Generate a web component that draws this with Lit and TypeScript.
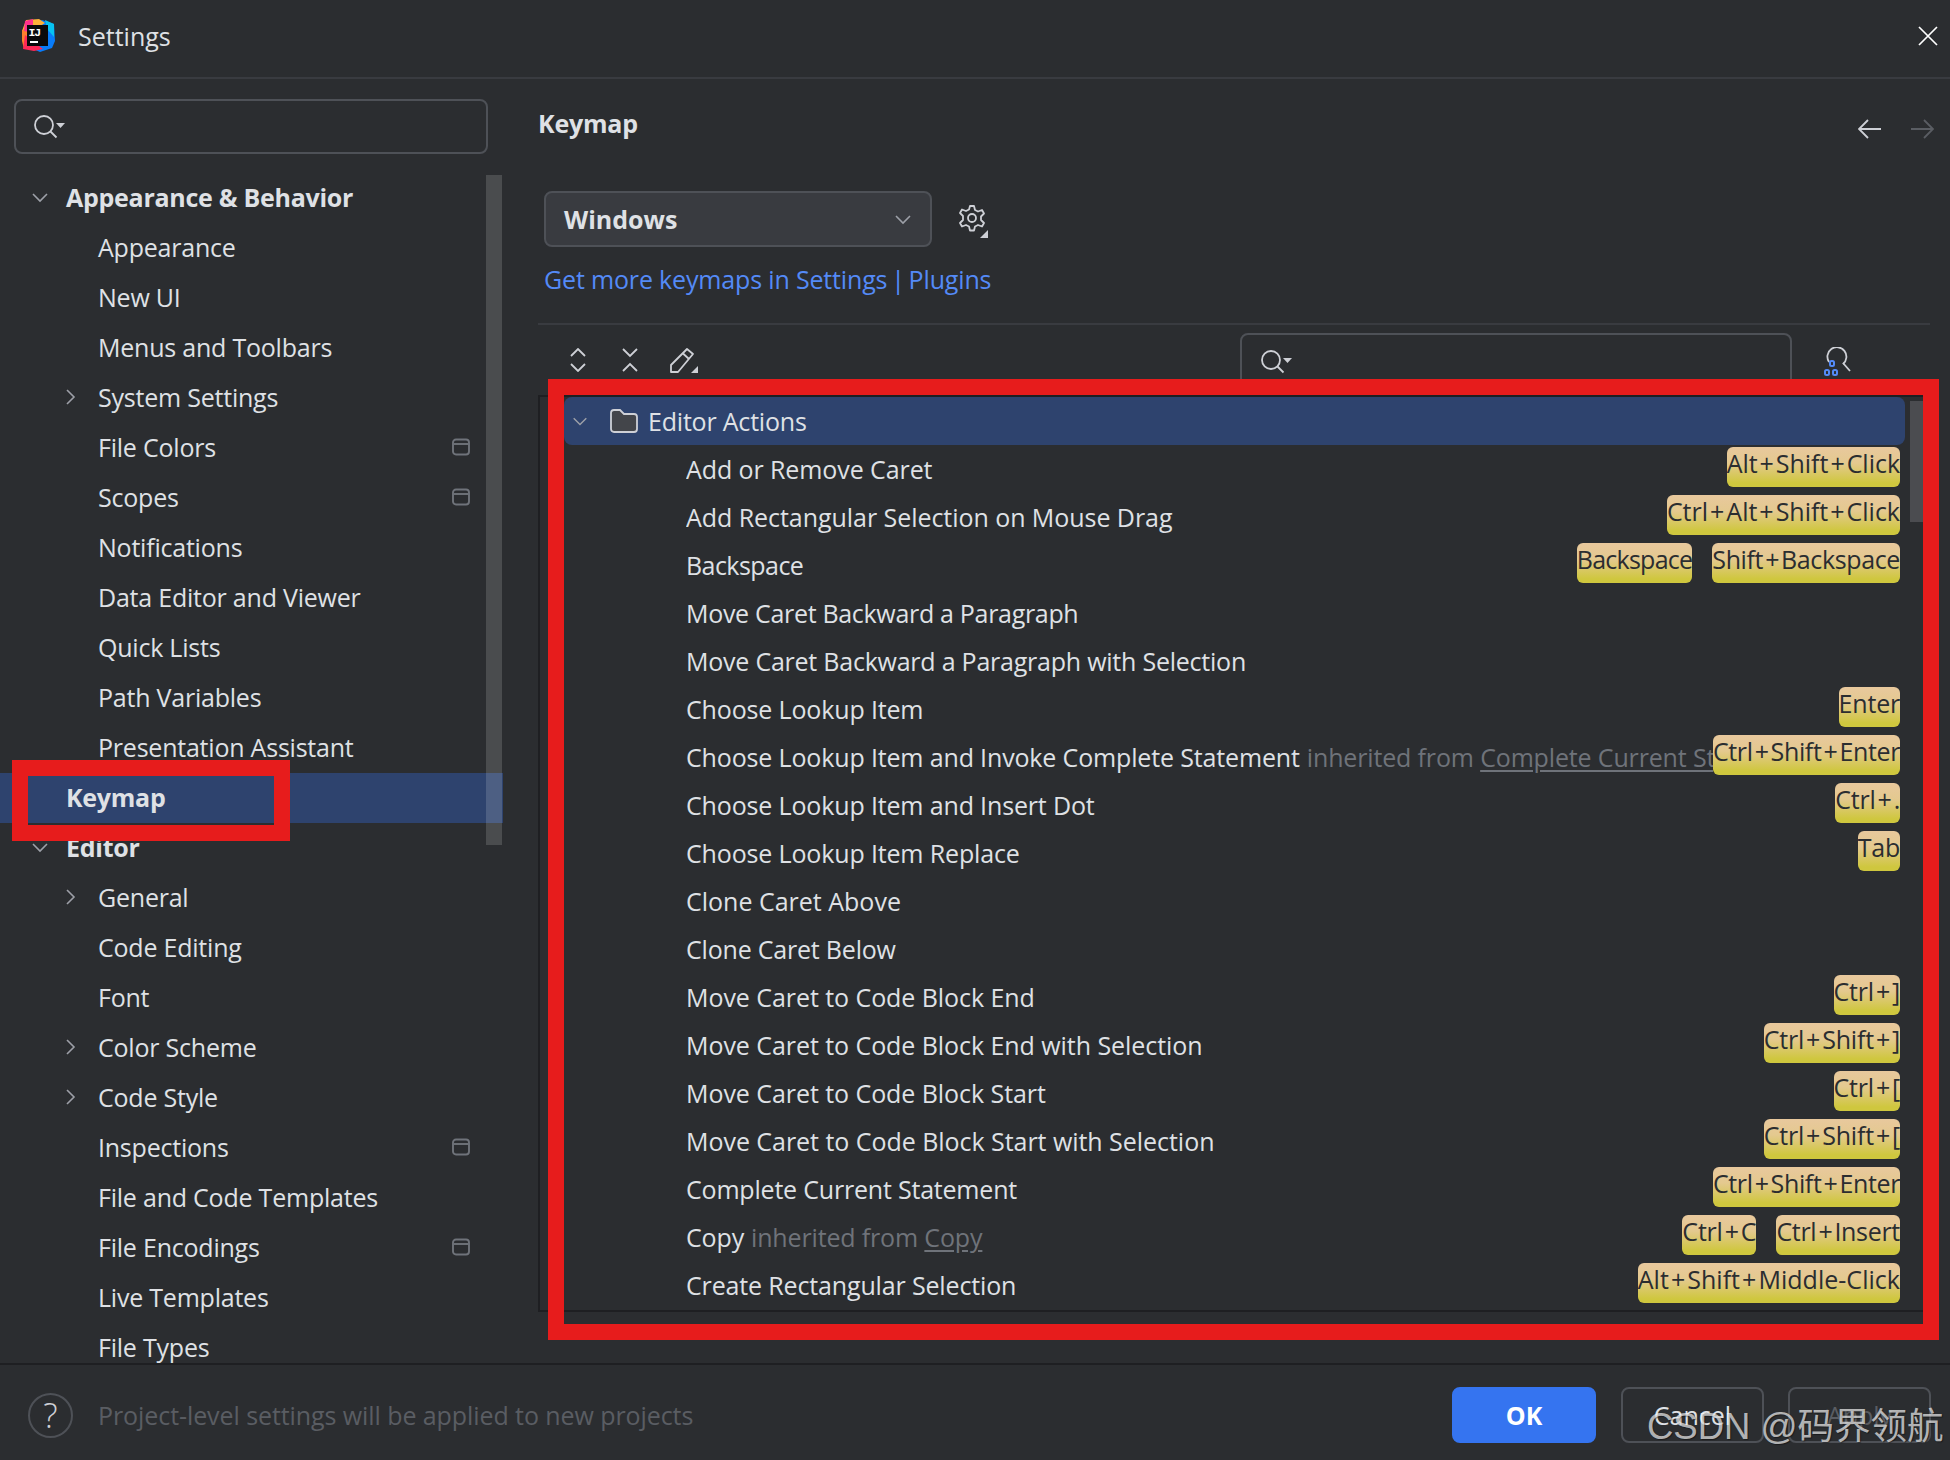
import { LitElement, html, css } from "lit";
import { customElement } from "lit/decorators.js";

type Nav = { t: string; kind?: "group" | "sel"; arrow?: boolean; db?: boolean };
const nav: Nav[] = [
  { t: "Appearance & Behavior", kind: "group" },
  { t: "Appearance" }, { t: "New UI" }, { t: "Menus and Toolbars" },
  { t: "System Settings", arrow: true },
  { t: "File Colors", db: true }, { t: "Scopes", db: true },
  { t: "Notifications" }, { t: "Data Editor and Viewer" }, { t: "Quick Lists" },
  { t: "Path Variables" }, { t: "Presentation Assistant" },
  { t: "Keymap", kind: "sel" },
  { t: "Editor", kind: "group" },
  { t: "General", arrow: true }, { t: "Code Editing" }, { t: "Font" },
  { t: "Color Scheme", arrow: true }, { t: "Code Style", arrow: true },
  { t: "Inspections", db: true }, { t: "File and Code Templates" },
  { t: "File Encodings", db: true }, { t: "Live Templates" }, { t: "File Types" },
];

type Row = { t: string; keys?: string[]; inh?: string; ls?: number };
const rows: Row[] = [
  { t: "Add or Remove Caret", keys: ["Alt+Shift+Click"], ls: -0.09 },
  { t: "Add Rectangular Selection on Mouse Drag", keys: ["Ctrl+Alt+Shift+Click"], ls: -0.05 },
  { t: "Backspace", keys: ["Backspace", "Shift+Backspace"], ls: -0.55 },
  { t: "Move Caret Backward a Paragraph", ls: -0.31 },
  { t: "Move Caret Backward a Paragraph with Selection", ls: -0.23 },
  { t: "Choose Lookup Item", keys: ["Enter"] },
  { t: "Choose Lookup Item and Invoke Complete Statement", inh: "Complete Current Statement", keys: ["Ctrl+Shift+Enter"] },
  { t: "Choose Lookup Item and Insert Dot", keys: ["Ctrl+."] },
  { t: "Choose Lookup Item Replace", keys: ["Tab"] },
  { t: "Clone Caret Above", ls: 0 },
  { t: "Clone Caret Below", ls: -0.2 },
  { t: "Move Caret to Code Block End", keys: ["Ctrl+]"], ls: -0.06 },
  { t: "Move Caret to Code Block End with Selection", keys: ["Ctrl+Shift+]"], ls: -0.06 },
  { t: "Move Caret to Code Block Start", keys: ["Ctrl+["], ls: -0.06 },
  { t: "Move Caret to Code Block Start with Selection", keys: ["Ctrl+Shift+["], ls: -0.04 },
  { t: "Complete Current Statement", keys: ["Ctrl+Shift+Enter"], ls: -0.2 },
  { t: "Copy", inh: "Copy", keys: ["Ctrl+C", "Ctrl+Insert"] },
  { t: "Create Rectangular Selection", keys: ["Alt+Shift+Middle-Click"] },
];

// Fine letter spacing per shortcut, so each badge has the width it has in the reference.
const keySpacing: Record<string, number> = {
  "Alt+Shift+Click": -0.03,
  "Ctrl+Alt+Shift+Click": -0.01,
  "Backspace": -0.75,
  "Shift+Backspace": -0.37,
  "Ctrl+Shift+Enter": -0.36,
  "Ctrl+Insert": -0.3,
  "Alt+Shift+Middle-Click": 0.03,
};

const chevDown = (size = 20) => html`<svg class="ic" width=${size} height=${size} viewBox="0 0 20 20" fill="none"><path d="M3 7l7 7 7-7" stroke="#9da0a8" stroke-width="1.6"/></svg>`;
const chevRight = html`<svg width="20" height="20" viewBox="0 0 20 20" fill="none"><path d="M6 3l7 7-7 7" stroke="#9da0a8" stroke-width="1.6"/></svg>`;
const dbIcon = html`<svg class="db" width="18" height="18" viewBox="0 0 18 18" fill="none"><rect x="1" y="1.500" width="16" height="15" rx="3" stroke="#6f737a" stroke-width="1.9"/><path d="M1.500 6h15" stroke="#6f737a" stroke-width="1.9"/></svg>`;
const searchIcon = html`<svg width="34" height="26" viewBox="0 0 34 26" fill="none"><circle cx="11" cy="11" r="9" stroke="#ced0d6" stroke-width="1.8"/><path d="M17.500 17.500l6 6" stroke="#ced0d6" stroke-width="1.8"/><path d="M23 9h9l-4.500 5z" fill="#ced0d6"/></svg>`;
const logo = html`<svg width="34" height="34" viewBox="0 0 34 34">
  <polygon points="21,1 33,5 34,22 31,29 19,33 12,30 12,6" fill="#087cfa"/>
  <polygon points="24,1 33,5 33,18 26,10" fill="#07c3f2"/>
  <polygon points="5,1 18,0 24,4 8,14 1,12" fill="#fcb13a"/>
  <polygon points="1,11 8,9 8,25 3,30 1,22" fill="#fe7f2d"/>
  <polygon points="2,30 4,16 22,30 13,32" fill="#fe2857"/>
  <polygon points="4,2 12,0 12,14 3,12" fill="#ff318c"/>
  <rect x="6" y="6" width="21" height="21" fill="#0a0a0c"/>
  <rect x="9" y="22" width="8" height="2" fill="#fff"/>
  <text class="ij" x="7.500" y="17">IJ</text>
</svg>`;

const keyText = (k: string) => {
  const parts = k.split("+");
  return parts.map((p, i) => (i === 0 ? p : html`<span class="plus">+</span>${p}`));
};

@customElement("app-root")
export class AppRoot extends LitElement {
  static styles = css`
    :host { display: block; width: 1950px; height: 1460px; position: relative; overflow: hidden; background: #2b2d30; color: #dfe1e5; font-family: "Open Sans", "Noto Sans", sans-serif; font-size: 25px; }
    * { box-sizing: border-box; }
    svg { display: block; flex: none; }
    .ij { font: 700 11.5px "Liberation Mono", monospace; letter-spacing: -1.200px; fill: #fff; }
    .root { height: 1460px; display: flex; flex-direction: column; }
    .title { height: 79px; flex: none; display: flex; align-items: center; padding: 0 12px 6px 21px; border-bottom: 2px solid #393b40; }
    .title .name { margin-left: 23px; }
    .close { margin-left: auto; }
    .body { flex: 1; min-height: 0; display: flex; overflow: hidden; }
    .side { width: 538px; flex: none; position: relative; padding-top: 20px; overflow: hidden; }
    .search { margin-left: 14px; width: 474px; height: 55px; border: 2px solid #4e5157; border-radius: 8px; display: flex; align-items: center; padding-left: 17px; }
    .tree { margin-top: 19px; letter-spacing: -.22px; }
    .nav { height: 50px; display: flex; align-items: center; padding: 0 0 2px 98px; width: 503px; position: relative; white-space: nowrap; }
    .nav.group, .nav.sel { padding-left: 66px; font-weight: 700; letter-spacing: -.27px; }
    .nav.sel { background: #2e436e; }
    .nav .ic { position: absolute; left: 30px; top: 14px; }
    .arrow { position: absolute; left: 61px; top: 14px; }
    .db { position: absolute; left: 452px; top: 15px; }
    .sbar { position: absolute; left: 486px; top: 96px; width: 16px; height: 670px; background: rgba(255,255,255,.15); }
    .main { flex: 1; min-width: 0; display: flex; flex-direction: column; }
    .head { height: 92px; flex: none; display: flex; align-items: flex-start; padding: 27px 16px 0 0; font-weight: 700; letter-spacing: -.2px; }
    .nav-arrows { margin-left: auto; display: flex; gap: 28px; padding-top: 13px; }
    .combo-row { display: flex; align-items: center; margin: 20px 0 0 6px; gap: 25px; }
    .gear { margin-top: 4px; }
    .combo { width: 388px; height: 56px; background: #393b40; border: 2px solid #4e5157; border-radius: 8px; display: flex; align-items: center; justify-content: space-between; padding: 0 17px 0 18px; font-weight: 700; }
    .link { margin: 15px 0 0 6px; height: 34px; line-height: 34px; color: #548af7; white-space: nowrap; letter-spacing: -.16px; flex: none; }
    .pipe { word-spacing: -2.500px; }
    .sep { margin: 27px 20px 0 0; height: 2px; background: #393b40; flex: none; }
    .tools { height: 70px; flex: none; display: flex; padding-left: 32px; }
    .tools .t { display: flex; align-items: center; gap: 36px; height: 48px; padding-top: 22px; }
    .pen { margin-left: -4px; }
    .find { margin-left: 542px; margin-top: 8px; width: 552px; height: 70px; border: 2px solid #4e5157; border-radius: 8px; padding: 14px 0 0 18px; }
    .fs { margin: 22px 0 0 31px; }
    .table { flex: none; margin-right: 25px; border-left: 2px solid #1e1f22; border-top: 2px solid #1e1f22; border-bottom: 2px solid #1e1f22; padding: 0 20px 0 24px; position: relative; }
    .rows { height: 913px; overflow: hidden; }
    .row { height: 48px; display: flex; align-items: flex-start; padding: 2px 5px 0 122px; white-space: nowrap; gap: 20px; }
    .label { flex: 1; min-width: 0; overflow: hidden; line-height: 45px; letter-spacing: -.15px; }
    .muted { color: #6f737a; margin-left: 7px; }
    .muted u { text-underline-offset: 3px; }
    .k { flex: none; height: 40px; line-height: 33px; border-radius: 6px; color: #2b2d30; background: linear-gradient(#e8c89d 0%, #e4c98f 40%, #cfc73e 90%); letter-spacing: -.2px; margin-left: -20px; margin-right: 20px; }
    .k:last-child { margin-right: 0; }
    .plus { margin: 0 2px; }
    .head-row { height: 48px; display: flex; align-items: center; background: #2e436e; border-radius: 8px; padding-left: 7px; }
    .fold { margin: 0 10px 0 21px; }
    .ea { letter-spacing: -.2px; }
    .sb2 { position: absolute; left: 1370px; top: 4px; width: 14px; height: 121px; background: #4b4c50; }
    .foot { height: 97px; flex: none; border-top: 2px solid #1e1f22; display: flex; align-items: center; padding: 5px 19px 0 28px; }
    .help { width: 45px; height: 45px; border-radius: 50%; border: 2px solid #4e5157; display: flex; align-items: center; justify-content: center; color: #ced0d6; font-size: 34px; font-weight: 300; }
    .hint { margin-left: 25px; color: #5a5d63; letter-spacing: -.08px; }
    .btns { margin-left: auto; display: flex; gap: 24px; }
    .btn { width: 143px; height: 56px; border-radius: 8px; border: 2px solid #4e5157; display: flex; align-items: center; justify-content: center; }
    .btn.ok { width: 144px; margin-right: 1px; background: #3574f0; border-color: #3574f0; color: #fff; font-weight: 700; }
    .btn.off { color: #5a5d63; }
    .red { position: absolute; border: 16px solid #e71c1c; pointer-events: none; }
    .red.a { left: 12px; top: 760px; width: 278px; height: 81px; }
    .red.b { left: 548px; top: 379px; width: 1391px; height: 961px; }
    .wm { position: absolute; left: 1647px; top: 1397px; font: 36.500px "Liberation Sans", "Noto Sans CJK SC", sans-serif; color: rgba(255,255,255,.68); white-space: nowrap; text-shadow: 1px 1px 1px rgba(0,0,0,.4); }
  `;

  private navRow(n: Nav) {
    return html`<div class="nav ${n.kind ?? ""}">
      ${n.kind === "group" ? chevDown() : ""}
      ${n.arrow ? html`<span class="arrow">${chevRight}</span>` : ""}
      ${n.t}
      ${n.db ? dbIcon : ""}
    </div>`;
  }

  private row(r: Row) {
    const ls = r.ls === undefined ? "" : `letter-spacing:${r.ls}px`;
    return html`<div class="row">
      <div class="label" style=${ls}>${r.t}${r.inh ? html`<span class="muted">inherited from <u>${r.inh}</u></span>` : ""}</div>
      ${(r.keys ?? []).map((k) => {
        const s = keySpacing[k];
        return html`<div class="k" style=${s === undefined ? "" : `letter-spacing:${s}px`}>${keyText(k)}</div>`;
      })}
    </div>`;
  }

  render() {
    return html`<div class="root">
      <div class="title">
        ${logo}
        <span class="name">Settings</span>
        <svg class="close" width="20" height="20" viewBox="0 0 20 20" fill="none"><path d="M1 1l18 18M19 1L1 19" stroke="#fff" stroke-width="1.700"/></svg>
      </div>
      <div class="body">
        <div class="side">
          <div class="search">${searchIcon}</div>
          <div class="tree">${nav.map((n) => this.navRow(n))}</div>
          <div class="sbar"></div>
        </div>
        <div class="main">
          <div class="head">
            <span>Keymap</span>
            <div class="nav-arrows">
              <svg width="24" height="20" viewBox="0 0 24 20" fill="none"><path d="M23 10H2M10 1l-9 9 9 9" stroke="#ced0d6" stroke-width="1.800"/></svg>
              <svg width="24" height="20" viewBox="0 0 24 20" fill="none"><path d="M1 10h21M14 1l9 9-9 9" stroke="#5a5d63" stroke-width="1.800"/></svg>
            </div>
          </div>
          <div class="combo-row">
            <div class="combo"><span>Windows</span>${chevDown(20)}</div>
            <svg class="gear" width="32" height="34" viewBox="0 0 32 34" fill="none"><path d="M13 2h4l1 4 3 1.500 4-1.500 2 3.500-3 3v3.500l3 3-2 3.500-4-1.500-3 1.500-1 4h-4l-1-4-3-1.500-4 1.500-2-3.500 3-3V12L3 9l2-3.500L9 7l3-1.500z" stroke="#ced0d6" stroke-width="1.800" stroke-linejoin="round"/><circle cx="15" cy="14" r="4" stroke="#ced0d6" stroke-width="1.800"/><path d="M31 26v8h-8z" fill="#ced0d6"/></svg>
          </div>
          <div class="link">Get more keymaps in Settings<span class="pipe"> | </span>Plugins</div>
          <div class="sep"></div>
          <div class="tools">
            <div class="t">
              <svg width="16" height="24" viewBox="0 0 16 24" fill="none"><path d="M1 8l7-7 7 7M1 16l7 7 7-7" stroke="#ced0d6" stroke-width="1.800"/></svg>
              <svg width="16" height="24" viewBox="0 0 16 24" fill="none"><path d="M1 1l7 7 7-7M1 23l7-7 7 7" stroke="#ced0d6" stroke-width="1.800"/></svg>
              <svg class="pen" width="28" height="26" viewBox="0 0 28 26" fill="none"><path d="M17 2l6 5L8 25H1v-7z" stroke="#ced0d6" stroke-width="1.800" stroke-linejoin="round"/><path d="M13 6.500l6 5.500" stroke="#ced0d6" stroke-width="1.800"/><path d="M28 19v7h-7z" fill="#ced0d6"/></svg>
            </div>
            <div class="find">${searchIcon}</div>
            <div class="fs">
              <svg width="30" height="30" viewBox="0 0 30 30" fill="none"><path d="M6 15a9.500 9.500 0 1 1 14 2" stroke="#ced0d6" stroke-width="1.800"/><path d="M20 16l7 8" stroke="#ced0d6" stroke-width="1.800"/><g stroke="#548af7" stroke-width="2"><rect x="7" y="14" width="4" height="5" rx="1.500"/><rect x="2" y="23" width="4" height="5" rx="1.500"/><rect x="10" y="23" width="4" height="5" rx="1.500"/></g></svg>
            </div>
          </div>
          <div class="table">
            <div class="rows">
              <div class="head-row">
                ${chevDown(18)}
                <svg class="fold" width="28" height="24" viewBox="0 0 28 24" fill="none"><path d="M1 4a3 3 0 0 1 3-3h6l4 4h10a3 3 0 0 1 3 3v12a3 3 0 0 1-3 3H4a3 3 0 0 1-3-3z" fill="#43454a" stroke="#ced0d6" stroke-width="1.800"/></svg>
                <span class="ea">Editor Actions</span>
              </div>
              ${rows.map((r) => this.row(r))}
            </div>
            <div class="sb2"></div>
          </div>
        </div>
      </div>
      <div class="foot">
        <div class="help">?</div>
        <div class="hint">Project-level settings will be applied to new projects</div>
        <div class="btns">
          <div class="btn ok">OK</div>
          <div class="btn">Cancel</div>
          <div class="btn off">Apply</div>
        </div>
      </div>
      <div class="red a"></div>
      <div class="red b"></div>
      <div class="wm">CSDN @码界领航</div>
    </div>`;
  }
}
